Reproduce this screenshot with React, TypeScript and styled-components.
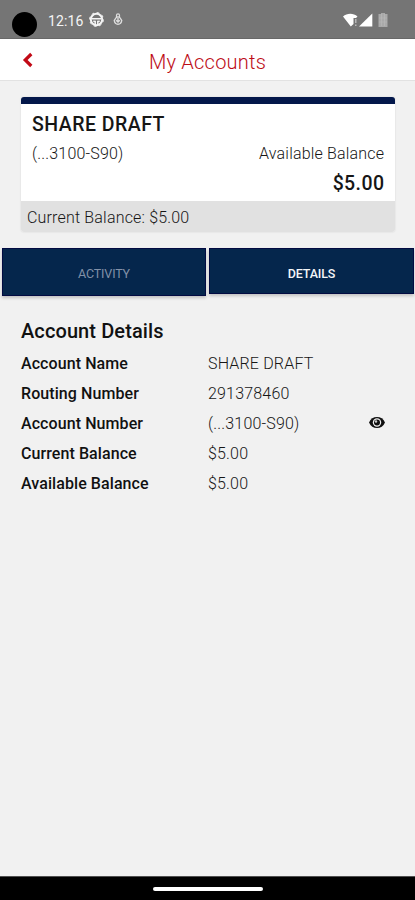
import React from "react";
import styled, { createGlobalStyle } from "styled-components";

const Global = createGlobalStyle`
  * { box-sizing: border-box; }
  body { margin: 0; background: #f1f1f1; font-family: Roboto, "Liberation Sans", sans-serif; }
`;

const Screen = styled.div`
  display: flex;
  flex-direction: column;
  width: 415px;
  height: 900px;
  overflow: hidden;
  background: #f1f1f1;
`;

const StatusBar = styled.div`
  display: flex;
  align-items: center;
  height: 39px;
  flex: none;
  padding: 1px 27px 0 12px;
  background: #757575;
  color: #f4f4f4;
  border-bottom: 1px solid #686868;
`;

const Camera = styled.span`
  width: 25px;
  height: 25px;
  margin-top: 9px;
  border-radius: 50%;
  background: #000;
`;

const Clock = styled.span`
  width: 41px;
  margin-left: 11px;
  font-size: 14px;
  line-height: 20px;
  letter-spacing: 0.1px;
  margin-top: 2px;
`;

const StatusIcon = styled.svg<{ $gap?: number }>`
  display: block;
  flex: none;
  margin-left: ${(p) => p.$gap ?? 0}px;
`;

const Spacer = styled.span`
  flex: 1;
`;

const Header = styled.header`
  display: grid;
  grid-template-columns: 40px 1fr 40px;
  align-items: center;
  flex: none;
  height: 42px;
  padding-top: 4px;
  background: #fff;
  border-bottom: 1px solid #e2e2e2;
`;

const BackButton = styled.button`
  display: flex;
  padding: 0 0 4px 22px;
  border: 0;
  background: none;
`;

const Title = styled.h1`
  margin: 0;
  text-align: center;
  font-size: 20px;
  line-height: 26px;
  font-weight: 300;
  letter-spacing: 0.22px;
  color: #bd0d17;
`;

const Card = styled.section`
  flex: none;
  width: 374px;
  height: 135px;
  margin: 16px 0 0 21px;
  overflow: hidden;
  border-radius: 3px;
  background: #fff;
  border-top: 7px solid #03174a;
  box-shadow: 0 0 2px rgba(0, 0, 0, 0.12);
`;

const CardBody = styled.div`
  height: 97px;
  padding: 7px 11px 0;
`;

const CardLine = styled.div<{ $height: number; $end?: boolean }>`
  display: flex;
  align-items: center;
  justify-content: ${(p) => (p.$end ? "flex-end" : "space-between")};
  height: ${(p) => p.$height}px;
`;

const Strong = styled.span<{ $spacing: number }>`
  font-size: 19.5px;
  font-weight: 500;
  letter-spacing: ${(p) => p.$spacing}px;
  margin-right: -${(p) => p.$spacing}px;
  color: #161616;
`;

const Light = styled.span`
  font-size: 16px;
  font-weight: 300;
  letter-spacing: 0.18px;
  margin-right: -0.18px;
  color: #161616;
  white-space: nowrap;
`;

const CardFooter = styled.div`
  display: flex;
  align-items: center;
  height: 31px;
  padding: 1px 6px 0;
  background: #e1e1e1;
`;

const Tabs = styled.nav`
  display: flex;
  flex: none;
  gap: 3px;
  height: 49px;
  margin-top: 16px;
  padding: 0 1px 0 2px;
  align-items: flex-start;
`;

const Tab = styled.button<{ $active?: boolean }>`
  flex: ${(p) => (p.$active ? "0 0 205px" : "0 0 204px")};
  height: ${(p) => (p.$active ? 46 : 48)}px;
  padding: ${(p) => (p.$active ? "4px 0 0" : "2px 0 0")};
  border: 1px solid #020b42;
  background: #05264c;
  color: ${(p) => (p.$active ? "#f4f5f8" : "#8291a7")};
  font-family: inherit;
  font-size: 12.5px;
  letter-spacing: -0.15px;
  font-weight: ${(p) => (p.$active ? 500 : 400)};
  box-shadow: 0 2px 3px rgba(0, 0, 0, 0.2);
`;

const Details = styled.main`
  flex: 1;
  padding: 20px 21px 0;
`;

const SectionTitle = styled.h2`
  margin: 0;
  height: 31px;
  font-size: 20px;
  line-height: 28px;
  font-weight: 500;
  letter-spacing: 0.1px;
  color: #111;
`;

const DetailRow = styled.div`
  display: grid;
  grid-template-columns: 187px 161px 16px;
  align-items: center;
  height: 30px;
`;

const Label = styled.span`
  font-size: 16px;
  font-weight: 500;
  letter-spacing: 0.08px;
  color: #111;
`;

const NavBar = styled.footer`
  display: flex;
  justify-content: center;
  flex: none;
  height: 24px;
  padding-top: 10px;
  border-top: 1px solid #505050;
  background: #000;
`;

const HomeHandle = styled.span`
  width: 110px;
  height: 4px;
  border-radius: 2px;
  background: #fff;
`;

const rows = [
  { label: "Account Name", value: "SHARE DRAFT" },
  { label: "Routing Number", value: "291378460" },
  { label: "Account Number", value: "(...3100-S90)", hidden: true },
  { label: "Current Balance", value: "$5.00" },
  { label: "Available Balance", value: "$5.00" },
];

const WheelIcon = () => (
  <StatusIcon width="15" height="15" viewBox="0 0 15 15" fill="none" stroke="#f4f4f4">
    <circle cx="7.5" cy="7.5" r="5.7" strokeWidth="2" />
    <circle cx="7.500" cy="7.500" r="6.900" strokeWidth="1" strokeDasharray="2.700 2.720" />
    <path d="M3 6.800h9M4.300 9.300l1.900.2v3M10.700 9.300l-1.900.2v3" strokeWidth="1.500" />
  </StatusIcon>
);

const MicIcon = () => (
  <StatusIcon $gap={9} width="10" height="13" viewBox="0 0 10 13" fill="none" stroke="#dedede">
    <path d="M3.500 5V2.300a1.500 1.500 0 0 1 3 0V5" strokeWidth="1.200" />
    <path d="M3.200 4.500 1.300 7.500c.3 2.400 1.700 3.700 3.700 3.700s3.400-1.300 3.700-3.700L6.800 4.500M5 3v5M3.200 7.200 5 9l1.800-1.800" strokeWidth="1.400" />
  </StatusIcon>
);

const EyeIcon = () => (
  <svg width="16" height="12" viewBox="0 0 16 12">
    <path d="M0 5.500C1.700 1.800 4.400 0 8 0S14.300 1.800 16 5.500C14.300 9.200 11.600 11 8 11S1.700 9.200 0 5.500Z" fill="#111" />
    <circle cx="8" cy="5.500" r="4.200" fill="#f1f1f1" />
    <circle cx="8" cy="5.500" r="3" fill="#111" />
    <circle cx="7" cy="4.500" r="1.200" fill="#d0d0d0" />
  </svg>
);

export default function App() {
  return (
    <Screen>
      <Global />
      <StatusBar>
        <Camera />
        <Clock>12:16</Clock>
        <WheelIcon />
        <MicIcon />
        <Spacer />
        <StatusIcon width="15" height="14" viewBox="0 0 15 14">
          <path d="M0 3.500C4-.3 10.500-.3 14.500 3.500L13 5h-2.500v6L7.800 13.500Z" fill="#fff" />
          <path d="M12.800 6v4M12.800 11.500v1.500" stroke="#c8c8c8" strokeWidth="1.200" />
        </StatusIcon>
        <StatusIcon $gap={1} width="14" height="14" viewBox="0 0 14 14">
          <path d="M13.300.5v13H0Z" fill="#fff" />
        </StatusIcon>
        <StatusIcon $gap={5} width="10" height="14" viewBox="0 0 10 14">
          <path d="M.5 1H3V0h4v1h2.500v13h-9Z" fill="#a9a9a9" />
          <path d="M1 5h8M3.500 1v12M6.500 1v12M1 9h8" stroke="#bababa" strokeWidth=".6" />
        </StatusIcon>
      </StatusBar>
      <Header>
        <BackButton aria-label="Back">
          <svg width="12" height="16" viewBox="0 0 12 16" fill="none">
            <path d="M9.300 2 3.200 8l6.100 6" stroke="#c20a16" strokeWidth="3.200" />
          </svg>
        </BackButton>
        <Title>My Accounts</Title>
      </Header>
      <Card>
        <CardBody>
          <CardLine $height={27}>
            <Strong $spacing={0.48}>SHARE DRAFT</Strong>
          </CardLine>
          <CardLine $height={31}>
            <Light>(...3100-S90)</Light>
            <Light>Available Balance</Light>
          </CardLine>
          <CardLine $height={28} $end>
            <Strong $spacing={0.4}>$5.00</Strong>
          </CardLine>
        </CardBody>
        <CardFooter>
          <Light>Current Balance: $5.00</Light>
        </CardFooter>
      </Card>
      <Tabs>
        <Tab>ACTIVITY</Tab>
        <Tab $active>DETAILS</Tab>
      </Tabs>
      <Details>
        <SectionTitle>Account Details</SectionTitle>
        {rows.map((row) => (
          <DetailRow key={row.label}>
            <Label>{row.label}</Label>
            <Light>{row.value}</Light>
            {row.hidden && <EyeIcon />}
          </DetailRow>
        ))}
      </Details>
      <NavBar>
        <HomeHandle />
      </NavBar>
    </Screen>
  );
}
